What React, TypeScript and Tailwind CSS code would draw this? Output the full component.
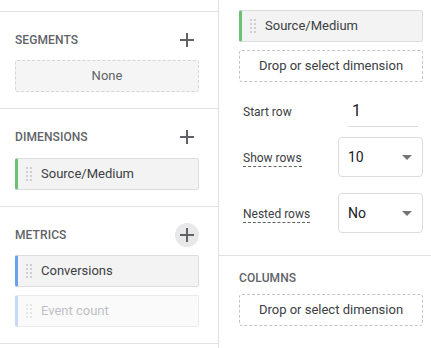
import React from "react";

function Handle({ light }: { light?: boolean }) {
  const c = light ? "bg-[#e6e6e6]" : "bg-[#cfcfcf]";
  return (
    <div className="grid grid-cols-2 gap-x-[2px] gap-y-[2px] w-[6px] shrink-0">
      {Array.from({ length: 8 }).map((_, i) => (
        <div key={i} className={`w-[2px] h-[2px] ${c}`} />
      ))}
    </div>
  );
}

function Chip({
  label,
  color,
  disabled,
}: {
  label: string;
  color: string;
  disabled?: boolean;
}) {
  return (
    <div
      className={`flex items-center h-8 border border-l-[3px] rounded-[2px] pl-[8px] ${
        disabled ? "bg-[#fafafa] border-[#ebebeb]" : "bg-[#f3f3f3] border-[#dadce0]"
      }`}
      style={{ borderLeftColor: color }}
    >
      <Handle light={disabled} />
      <span
        className={`ml-[9px] text-[13px] ${
          disabled ? "text-[#bdc1c6]" : "text-[#3c4043]"
        }`}
      >
        {label}
      </span>
    </div>
  );
}

function Plus({ circle }: { circle?: boolean }) {
  return (
    <div
      className={`w-6 h-6 flex items-center justify-center rounded-full ${
        circle ? "bg-[#e8e8e8]" : ""
      }`}
    >
      <svg width="16" height="16" viewBox="0 0 16 16">
        <path d="M8 1v14M1 8h14" stroke="#5f6368" strokeWidth="2" />
      </svg>
    </div>
  );
}

function SectionLabel({ children }: { children: React.ReactNode }) {
  return (
    <div className="text-[12px] font-medium text-[#5f6368] leading-4 tracking-[0.1px]">
      {children}
    </div>
  );
}

function Select({ value }: { value: string }) {
  return (
    <div className="w-[85px] h-10 border border-[#dadce0] rounded-[4px] flex items-center justify-between pl-[9px] pr-[10px]">
      <span className="text-[14px] text-[#202124]">{value}</span>
      <svg width="10" height="5" viewBox="0 0 10 5">
        <path d="M0 0h10L5 5z" fill="#757575" />
      </svg>
    </div>
  );
}

export default function App() {
  return (
    <div
      className="w-[431px] h-[348px] bg-white flex overflow-hidden"
      style={{ fontFamily: "Roboto, 'Liberation Sans', sans-serif" }}
    >
      {/* Left panel */}
      <div className="w-[219px] shrink-0 border-r border-[#e0e0e0] flex flex-col">
        <div className="h-[12px] border-b border-[#e0e0e0] shrink-0" />
        <div className="pt-4 pb-4 pl-[15px] pr-[19px] border-b border-[#e0e0e0]">
          <div className="h-6 flex items-center justify-between">
            <SectionLabel>SEGMENTS</SectionLabel>
            <Plus />
          </div>
          <div className="mt-2 h-8 bg-[#f5f5f5] border border-dashed border-[#d6d6d6] rounded-[2px] flex items-center justify-center text-[13px] text-[#5f6368]">
            None
          </div>
        </div>
        <div className="pt-4 pb-4 pl-[15px] pr-[19px] border-b border-[#e0e0e0]">
          <div className="h-6 flex items-center justify-between">
            <SectionLabel>DIMENSIONS</SectionLabel>
            <Plus />
          </div>
          <div className="mt-[9px]">
            <Chip label="Source/Medium" color="#6cc070" />
          </div>
        </div>
        <div className="pt-4 pb-4 pl-[15px] pr-[19px] border-b border-[#e0e0e0]">
          <div className="h-6 flex items-center justify-between">
            <SectionLabel>METRICS</SectionLabel>
            <Plus circle />
          </div>
          <div className="mt-2 flex flex-col gap-2">
            <Chip label="Conversions" color="#6a9ff0" />
            <Chip label="Event count" color="#c5d9f8" disabled />
          </div>
        </div>
      </div>

      {/* Right panel */}
      <div className="flex-1 flex flex-col">
        <div className="pt-[10px] pl-5 pr-2 pb-[22px] border-b border-[#e0e0e0]">
          <Chip label="Source/Medium" color="#6cc070" />
          <div className="mt-2 h-8 border border-dashed border-[#c4c4c4] rounded-[3px] flex items-center justify-center text-[13px] text-[#3c4043]">
            Drop or select dimension
          </div>
          <div className="mt-[14px] flex items-center h-[31px]">
            <div className="w-[99px] pl-1 text-[12px] text-[#3c4043]">Start row</div>
            <div className="ml-[10px] w-[70px] h-[31px] border-b border-[#dadce0] flex items-center pl-[4px] text-[16px] text-[#202124]">
              1
            </div>
          </div>
          <div className="mt-[10px] flex items-center">
            <div className="w-[99px] pl-1">
              <span className="text-[12px] text-[#3c4043] border-b border-dashed border-[#5f6368] pb-[1px]">
                Show rows
              </span>
            </div>
            <Select value="10" />
          </div>
          <div className="mt-4 flex items-center">
            <div className="w-[99px] pl-1">
              <span className="text-[12px] text-[#3c4043] border-b border-dashed border-[#5f6368] pb-[1px]">
                Nested rows
              </span>
            </div>
            <Select value="No" />
          </div>
        </div>
        <div className="pt-[14px] pl-5 pr-2">
          <SectionLabel>COLUMNS</SectionLabel>
          <div className="mt-[8px] h-8 border border-dashed border-[#c4c4c4] rounded-[3px] flex items-center justify-center text-[13px] text-[#3c4043]">
            Drop or select dimension
          </div>
        </div>
      </div>
    </div>
  );
}
